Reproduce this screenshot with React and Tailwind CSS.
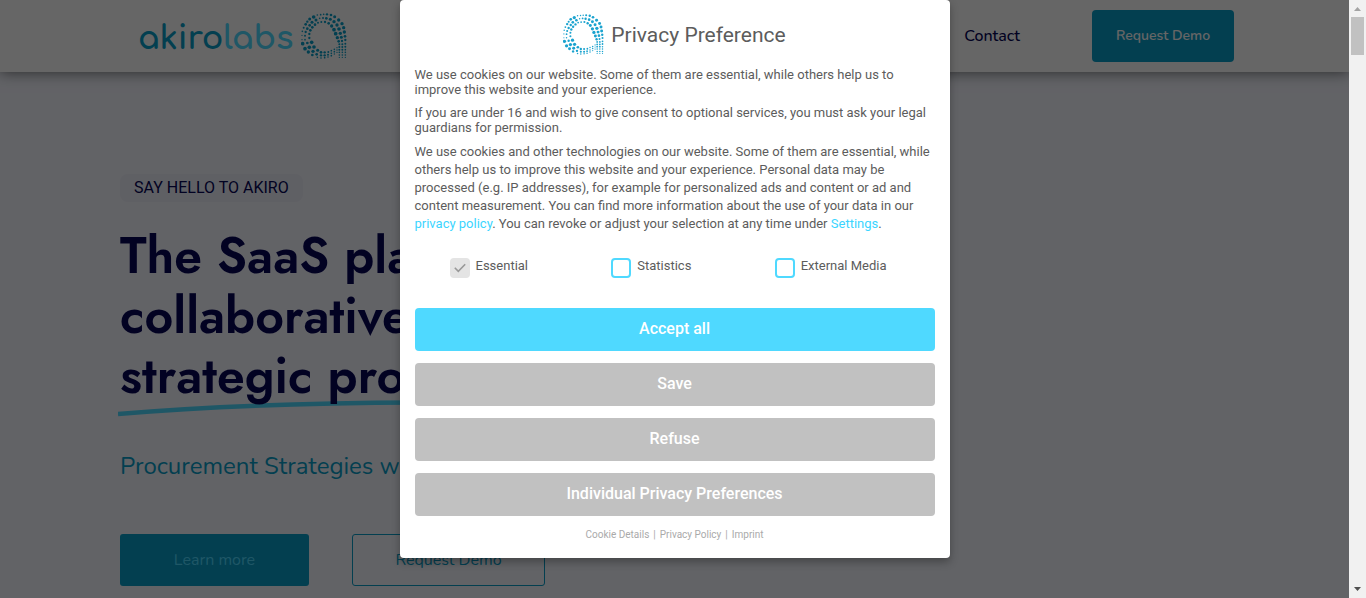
import React from "react";

const DOTS = [
  [38,120,2],[38,107,2],[39,95,2.5],[43,84,3],[49,74,4],[54,66,3.5],[61,58,4.5],[73,52,5.5],[84,46,2.5],[94,45,2.5],[103,44,2.5],[113,44,3.5],[125,46,4],[136,51,4.5],[148,61,5],[158,72,5],[163,84,5],[165,97,5],[167,110,4],[168,121,3.5],
  [47,120,2.5],[47,108,3],[49,97,3.5],[54,87,4],[61,77,4],[68,68,4.5],[80,61,4.5],[91,56,2.5],[101,55,3],[111,56,4],[123,59,4.5],[134,66,5],[143,76,5],[149,88,5.5],[153,101,5],[156,113,4.5],[158,124,3.5],
  [60,115,3.5],[60,103,3.5],[63,92,4],[69,83,4],[77,75,4],[86,69,3],[96,67,3],[107,67,3.5],[118,71,4],[127,79,5],[134,90,5.5],[139,102,5.5],[144,114,5],[148,125,4],
  [40,132,5.5],[54,130,4],[67,128,5.5],[47,147,5.5],[60,143,5.5],[74,142,5.5],[57,157,5],[71,155,5],[85,152,4.5],[69,166,4],[82,164,4],[95,158,4],[84,173,2.5],[95,167,3.5],[106,158,3.5],[95,175,2.5],[106,167,3.5],[106,174,2.5],[117,157,3],[116,165,3],[116,172,2.5],[126,153,2.5],[126,161,2.5],[126,168,2.5],[135,149,2.5],[135,156,2.5],[135,163,2],[143,144,2],[143,151,2],[143,158,2],
  [150,134,3],[159,134,3],[168,132,3],[150,142,3],[159,142,3],[168,141,3],[150,150,3],[159,150,3],[168,150,2.5],[150,158,2.5],[159,158,2.5],[168,158,2.5],[150,166,2.5],[159,166,2.5],[168,166,2.5],[150,173,2],[159,173,2],[168,173,2],
];

function DotMark({ className }) {
  return (
    <svg viewBox="35 40 138 138" className={className} aria-hidden="true">
      {DOTS.map(([x, y, r]) => (
        <circle key={`${x}-${y}`} cx={x} cy={y} r={r} />
      ))}
    </svg>
  );
}

const nunito = "font-[Nunito,'Open_Sans',sans-serif]";

function Header() {
  return (
    <header className="relative flex h-[72px] shrink-0 items-center justify-between bg-white pl-[138px] pr-[115px] shadow-[0_0_14px_rgba(0,0,0,0.6)]">
      <a href="#home" className="flex items-center gap-2">
        <span className="pt-1.5 font-[Comfortaa,Quicksand,Lato,sans-serif] text-[32px] font-bold leading-10 text-[#089dc8]">
          akiro<span className="text-[#4ed9ff]">labs</span>
        </span>
        <DotMark className="size-[46px] fill-[#089dc8]" />
      </a>
      <nav className={`${nunito} flex items-center gap-[72px]`}>
        <a href="#contact" className="text-base font-medium text-[#050556]">Contact</a>
        <a
          href="#demo"
          className="flex h-[52px] w-[142px] items-center justify-center rounded-[4px] bg-[#089dc8] text-sm font-semibold text-white"
        >
          Request Demo
        </a>
      </nav>
    </header>
  );
}

function Hero() {
  return (
    <main className="flex flex-col items-start px-[120px] pt-[102px]">
      <p className="rounded-[8px] bg-[#eeeffa] px-3.5 font-[Roboto,sans-serif] text-base leading-7 text-[#050556]">
        SAY HELLO TO AKIRO
      </p>
      <h1 className="relative mt-6 font-[Jost,Lato,sans-serif] text-[50px] font-semibold leading-[60px] text-[#050556]">
        <svg
          viewBox="0 0 500 20"
          className="absolute -bottom-3.5 -left-0.5 h-5 w-[500px]"
          fill="none"
          aria-hidden="true"
        >
          <path d="M0 14Q130 3 300 2.500Q400 2 500 4" stroke="#4ed9ff" strokeWidth="4.500" />
        </svg>
        <span className="relative block">The SaaS platform for</span>
        <span className="relative block">collaborative and</span>
        <span className="relative block">strategic procurement</span>
      </h1>
      <p className={`${nunito} mt-[42px] text-2xl leading-9 text-[#089dc8]`}>
        Procurement Strategies with impact
      </p>
      <div className={`${nunito} mt-[50px] flex gap-[43px] text-base`}>
        <a href="#more" className="flex h-[52px] w-[189px] items-center justify-center rounded-[3px] bg-[#089dc8] text-[#4ed9ff]">
          Learn more
        </a>
        <a href="#demo" className="flex h-[52px] w-[193px] items-center justify-center rounded-[3px] border border-[#089dc8] text-[#089dc8]">
          Request Demo
        </a>
      </div>
    </main>
  );
}

function Option({ id, label, ...rest }) {
  return (
    <div className="flex items-start gap-1.5">
      <span className="relative mt-0.5 flex size-5">
        <input
          id={id}
          type="checkbox"
          className="peer size-5 appearance-none rounded-[4px] border-2 border-[#4fd9ff] bg-white disabled:border-[#e4e4e4] disabled:bg-[#e4e4e4]"
          {...rest}
        />
        <svg
          viewBox="0 0 20 20"
          className="pointer-events-none absolute inset-0 hidden size-5 peer-checked:block"
          fill="none"
          stroke="#999"
          strokeWidth="1.600"
          aria-hidden="true"
        >
          <path d="M4.800 9.800L8.300 13.300L15.200 6.200" />
        </svg>
      </span>
      <label htmlFor={id} className="leading-5">{label}</label>
    </div>
  );
}

function Action({ children, primary }) {
  return (
    <button
      type="button"
      className={`h-[43px] w-full rounded-[4px] pb-px text-base font-medium text-white ${primary ? "bg-[#4fd9ff]" : "bg-[#c1c1c1]"}`}
    >
      {children}
    </button>
  );
}

function ConsentDialog() {
  return (
    <section
      role="dialog"
      aria-labelledby="consent-title"
      className="w-[550px] rounded-[4px] bg-white px-[15px] pb-4 pt-3.5 font-[Roboto,sans-serif] text-[13px] text-[#5c5c5c] shadow-[0_4px_8px_rgba(0,0,0,0.3)]"
    >
      <div className="flex items-center justify-center gap-[7px]">
        <DotMark className="size-[41px] fill-[#1ba3cf]" />
        <h2 id="consent-title" className="text-[21px] leading-6">Privacy Preference</h2>
      </div>
      <p className="mt-3 leading-[15px]">
        We use cookies on our website. Some of them are essential, while others help us to improve this website and your experience.
      </p>
      <p className="mt-2 leading-[15px]">
        If you are under 16 and wish to give consent to optional services, you must ask your legal guardians for permission.
      </p>
      <p className="mt-2 leading-[18px]">
        We use cookies and other technologies on our website. Some of them are essential, while others help us to improve this website and your experience. Personal data may be processed (e.g. IP addresses), for example for personalized ads and content or ad and content measurement. You can find more information about the use of your data in our{" "}
        <a href="#privacy" className="text-[#3cd5ff]">privacy policy</a>. You can revoke or adjust your selection at any time under{" "}
        <a href="#settings" className="text-[#3cd5ff]">Settings</a>.
      </p>
      <div className="mt-[23px] flex justify-between pl-[35px] pr-12">
        <Option id="essential" label="Essential" defaultChecked disabled />
        <Option id="statistics" label="Statistics" />
        <Option id="external" label="External Media" />
      </div>
      <div className="mt-[30px] flex flex-col gap-3">
        <Action primary>Accept all</Action>
        <Action>Save</Action>
        <Action>Refuse</Action>
        <Action>Individual Privacy Preferences</Action>
      </div>
      <div className="mt-3 flex justify-center gap-1 text-[10px] leading-[14px] text-[#aaa]">
        <a href="#details">Cookie Details</a>
        <span>|</span>
        <a href="#policy">Privacy Policy</a>
        <span>|</span>
        <a href="#imprint">Imprint</a>
      </div>
    </section>
  );
}

function ScrollBar() {
  return (
    <div className="flex w-[17px] shrink-0 flex-col items-center justify-between bg-[#f1f1f1]" aria-hidden="true">
      <div className="flex flex-col items-center">
        <svg viewBox="0 0 17 17" className="size-[17px]" fill="#a3a3a3">
          <path d="M5 11L8.500 7L12 11Z" />
        </svg>
        <div className="h-[38px] w-[13px] bg-[#c1c1c1]" />
      </div>
      <svg viewBox="0 0 17 17" className="size-[17px]" fill="#505050">
        <path d="M5 6L8.500 10L12 6Z" />
      </svg>
    </div>
  );
}

export default function App() {
  return (
    <div className="flex h-screen overflow-hidden">
      <div className="relative flex min-w-0 flex-1 flex-col overflow-hidden bg-[#f5f7ff]">
        <Header />
        <Hero />
        <div className="absolute inset-0 flex items-start justify-center bg-black/60">
          <ConsentDialog />
        </div>
      </div>
      <ScrollBar />
    </div>
  );
}
